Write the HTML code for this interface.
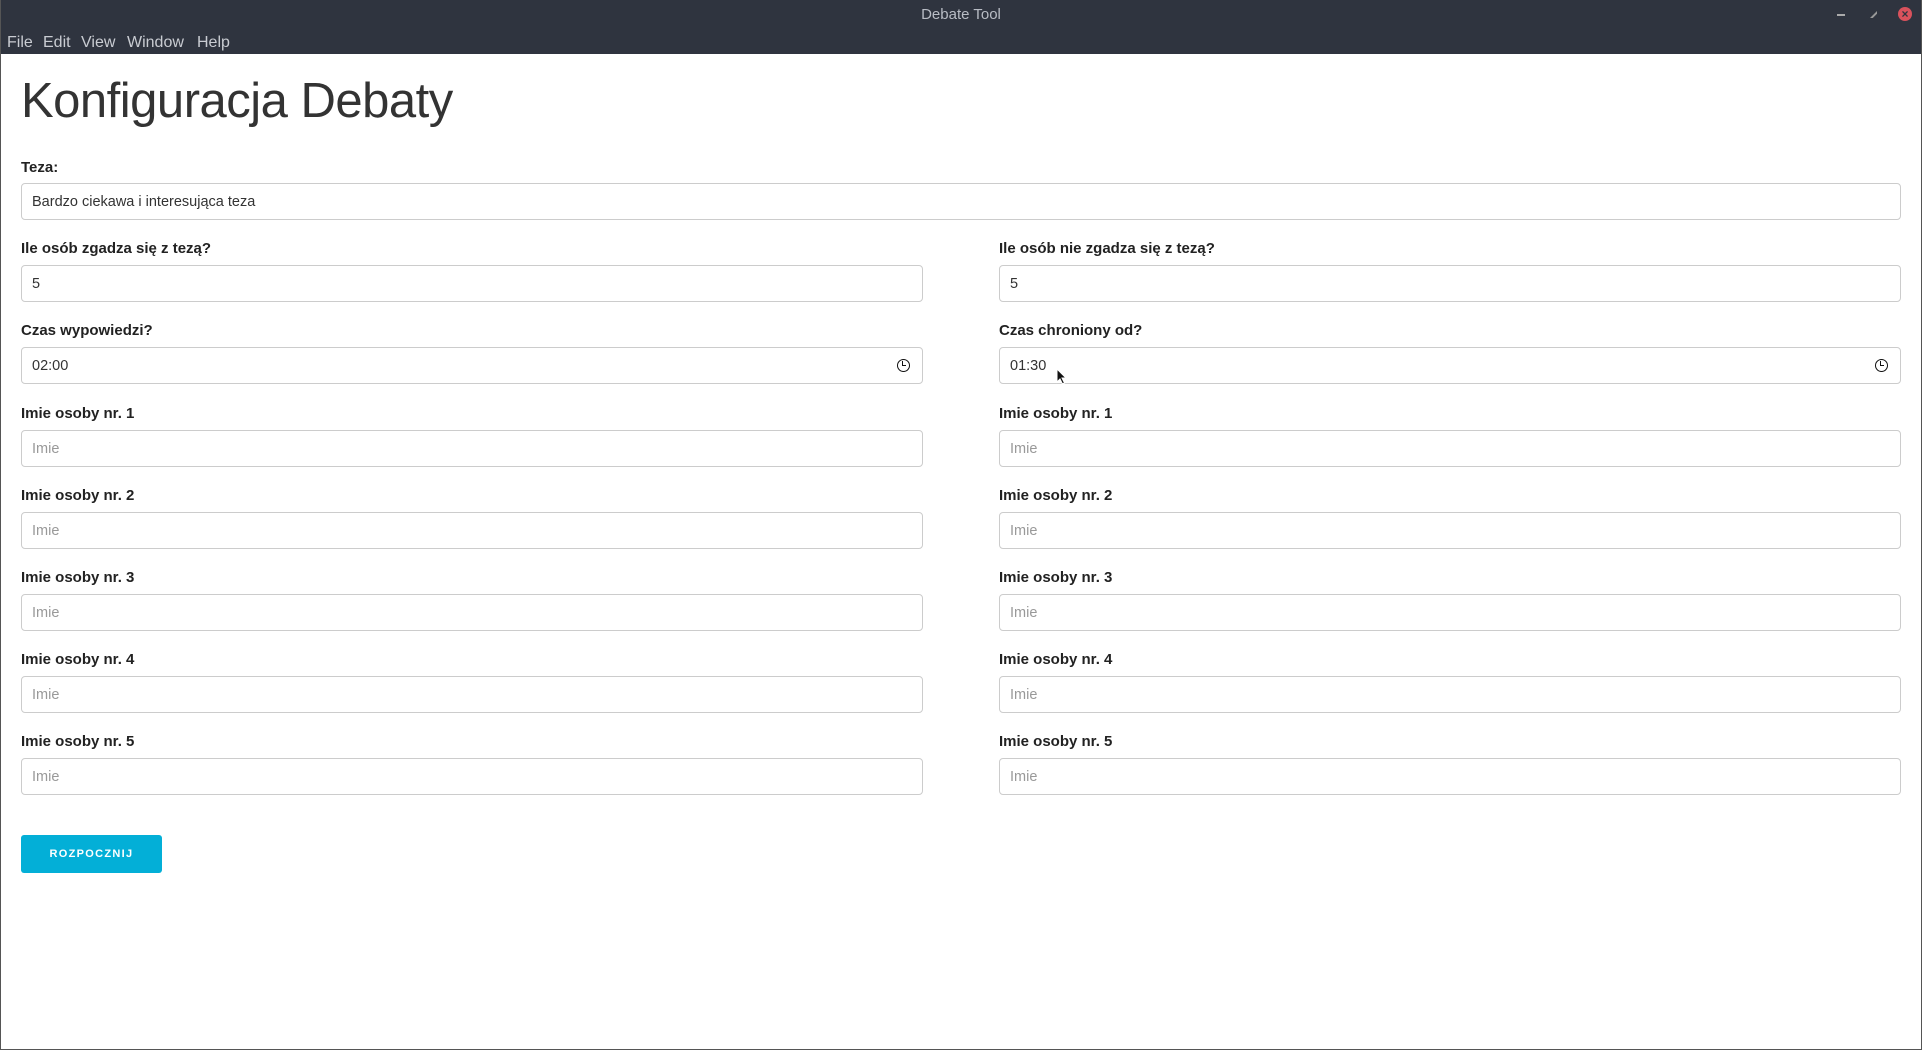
<!DOCTYPE html>
<html><head><meta charset="utf-8"><style>
*{margin:0;padding:0;box-sizing:border-box}
body{width:1922px;height:1050px;overflow:hidden;background:#fff;font-family:"Liberation Sans",sans-serif;position:relative}
.frame{position:absolute;left:0;top:0;width:1922px;height:1050px;border:1px solid #555;border-top:none}
.bar{position:absolute;left:0;top:0;width:1922px;height:54px;background:#2f343f}
.title{position:absolute;top:6px;width:1922px;text-align:center;color:#b8bcc4;font-size:15px}
.menu{position:absolute;top:34px;color:#c9ccd2;font-size:16px}
.lbl{position:absolute;font-size:15px;color:#222;font-weight:bold;line-height:20px}
.inp{position:absolute;height:37px;border:1px solid #ccc;border-radius:4px;font-size:14.5px;color:#333;padding-left:10px;line-height:36px}
.ph{color:#999}
.clock{position:absolute;right:12px;top:11px;width:13px;height:13px;border:1.5px solid #111;border-radius:50%}
.clock:after{content:"";position:absolute;left:4px;top:1px;width:3px;height:4px;border-left:1.5px solid #111;border-bottom:1.5px solid #111}
h1{position:absolute;left:21px;top:73px;font-size:49px;font-weight:normal;color:#333;letter-spacing:-0.5px}
.btn{position:absolute;left:21px;top:835px;width:141px;height:38px;background:#03afd7;border-radius:3px;color:#fff;font-size:11px;font-weight:bold;letter-spacing:1.3px;text-align:center;line-height:38px}
</style></head><body>
<div class="bar"></div>
<div class="title">Debate Tool</div>
<div class="menu" style="left:7px">File</div>
<div class="menu" style="left:43px">Edit</div>
<div class="menu" style="left:81px">View</div>
<div class="menu" style="left:127px">Window</div>
<div class="menu" style="left:197px">Help</div>
<div style="position:absolute;left:1837px;top:14px;width:8px;height:2px;background:#aaa"></div>
<div style="position:absolute;left:1870px;top:11px;width:7px;height:7px;background:#999;clip-path:polygon(0 100%,100% 0,100% 40%,40% 100%)"></div>
<div style="position:absolute;left:1898px;top:7px;width:14px;height:14px;border-radius:50%;background:#d9525c;color:#2f343f;font-size:12px;line-height:14px;text-align:center;font-weight:bold">×</div>
<h1>Konfiguracja Debaty</h1>
<div class="lbl" style="left:21px;top:158px">Teza:</div>
<div class="inp" style="left:21px;top:183px;width:1880px">Bardzo ciekawa i interesująca teza</div>

<div class="lbl" style="left:21px;top:239px">Ile osób zgadza się z tezą?</div>
<div class="inp" style="left:21px;top:265px;width:902px">5</div>
<div class="lbl" style="left:999px;top:239px">Ile osób nie zgadza się z tezą?</div>
<div class="inp" style="left:999px;top:265px;width:902px">5</div>

<div class="lbl" style="left:21px;top:321px">Czas wypowiedzi?</div>
<div class="inp" style="left:21px;top:347px;width:902px">02:00<div class="clock"></div></div>
<div class="lbl" style="left:999px;top:321px">Czas chroniony od?</div>
<div class="inp" style="left:999px;top:347px;width:902px">01:30<div class="clock"></div></div>

<div class="lbl" style="left:21px;top:404px">Imie osoby nr. 1</div>
<div class="inp ph" style="left:21px;top:430px;width:902px">Imie</div>
<div class="lbl" style="left:999px;top:404px">Imie osoby nr. 1</div>
<div class="inp ph" style="left:999px;top:430px;width:902px">Imie</div>

<div class="lbl" style="left:21px;top:486px">Imie osoby nr. 2</div>
<div class="inp ph" style="left:21px;top:512px;width:902px">Imie</div>
<div class="lbl" style="left:999px;top:486px">Imie osoby nr. 2</div>
<div class="inp ph" style="left:999px;top:512px;width:902px">Imie</div>

<div class="lbl" style="left:21px;top:568px">Imie osoby nr. 3</div>
<div class="inp ph" style="left:21px;top:594px;width:902px">Imie</div>
<div class="lbl" style="left:999px;top:568px">Imie osoby nr. 3</div>
<div class="inp ph" style="left:999px;top:594px;width:902px">Imie</div>

<div class="lbl" style="left:21px;top:650px">Imie osoby nr. 4</div>
<div class="inp ph" style="left:21px;top:676px;width:902px">Imie</div>
<div class="lbl" style="left:999px;top:650px">Imie osoby nr. 4</div>
<div class="inp ph" style="left:999px;top:676px;width:902px">Imie</div>

<div class="lbl" style="left:21px;top:732px">Imie osoby nr. 5</div>
<div class="inp ph" style="left:21px;top:758px;width:902px">Imie</div>
<div class="lbl" style="left:999px;top:732px">Imie osoby nr. 5</div>
<div class="inp ph" style="left:999px;top:758px;width:902px">Imie</div>

<div class="btn">ROZPOCZNIJ</div>
<svg style="position:absolute;left:1056px;top:368px" width="12" height="18" viewBox="0 0 12 18"><path d="M1 1 L1 14 L4 11 L6.5 16 L8.5 15 L6 10 L10 10 Z" fill="#111" stroke="#fff" stroke-width="1"/></svg>
<div class="frame"></div>
</body></html>
